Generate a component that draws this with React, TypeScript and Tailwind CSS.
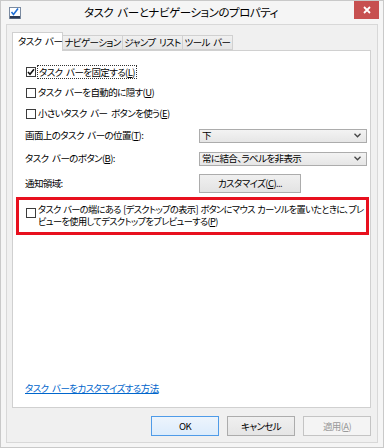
import React from 'react';

const jp = "font-['Noto_Sans_CJK_JP','Noto_Sans',sans-serif] [font-feature-settings:'palt']";

const Check: React.FC<{ checked?: boolean }> = ({ checked }) => (
  <span className="w-[10px] h-[10px] shrink-0 border border-[#3c3c3c] bg-white flex items-center justify-center">
    {checked && (
      <svg width="8" height="8" viewBox="0 0 8 8">
        <path d="M1 4 L3 6.2 L7 1.2" fill="none" stroke="#111" strokeWidth="1.6" />
      </svg>
    )}
  </span>
);

const Select: React.FC<{ value: string }> = ({ value }) => (
  <div className="w-[168px] h-[14px] border border-[#acacac] bg-gradient-to-b from-[#f3f3f3] to-[#e6e6e6] flex items-center pl-[2px] pr-[5px]">
    <span className="flex-1 leading-none">{value}</span>
    <svg width="7" height="5" viewBox="0 0 7 5">
      <path d="M0.5 0.8 L3.5 3.8 L6.5 0.8" fill="none" stroke="#444" strokeWidth="1.3" />
    </svg>
  </div>
);

const u = (c: string) => <span className="underline">{c}</span>;

const WinButton: React.FC<{ children: React.ReactNode; variant?: 'default' | 'normal' | 'disabled' }> = ({ children, variant = 'normal' }) => {
  const cls =
    variant === 'default'
      ? 'border-[#4f9be8] bg-gradient-to-b from-[#edf4fc] to-[#dcecfc] text-black'
      : variant === 'disabled'
      ? 'border-[#c4c4c4] bg-[#f4f4f4] text-[#9a9a9a]'
      : 'border-[#acacac] bg-gradient-to-b from-[#f0f0f0] to-[#e5e5e5] text-black';
  return (
    <div className={`w-[68px] h-[20px] border flex items-center justify-center ${cls}`}>{children}</div>
  );
};

const tabs = ['ナビゲーション', 'ジャンプ リスト', 'ツール バー'];

export default function App() {
  return (
    <div className={`w-[384px] h-[448px] bg-[#f5f5f5] border border-[#c9c9c9] flex flex-col text-[9.5px] tracking-[-0.6px] [word-spacing:2px] text-black ${jp}`}>
      {/* title bar */}
      <div className="h-[23px] flex items-start shrink-0">
        <div className="ml-[8px] mt-[6px] w-[13px] h-[13px]">
          <svg width="13" height="13" viewBox="0 0 13 13">
            <rect x="0.5" y="0.5" width="11" height="11" fill="#fff" stroke="#7a8aa0" />
            <path d="M2.5 5 L4.5 7.5 L9 1.5" fill="none" stroke="#1f6fd6" strokeWidth="1.6" />
            <rect x="1" y="9" width="10" height="2.5" fill="#2d3b55" />
          </svg>
        </div>
        <div className="flex-1 text-center text-[11.5px] tracking-[-0.45px] mt-[3px] pr-[14px]">タスク バーとナビゲーションのプロパティ</div>
        <div className="w-[25px] h-[18px] mr-[4px] bg-[#c75050] flex items-center justify-center">
          <svg width="8" height="8" viewBox="0 0 8 8">
            <path d="M1 1 L7 7 M7 1 L1 7" stroke="#fff" strokeWidth="1.8" />
          </svg>
        </div>
      </div>

      {/* body */}
      <div className="mx-[5px] h-[419px] border border-[#d8d8d8] bg-[#f0f0f0] pl-[5px] pr-[6px] pt-[7px] flex flex-col">
        <div className="flex items-end h-[18px] whitespace-nowrap">
          <div className="w-[51px] h-[19px] bg-white border border-[#d0d0d0] border-b-0 pl-[5px] pt-[4px] relative z-10 -mb-px leading-none">
            タスク バー
          </div>
          {tabs.map((t) => (
            <div key={t} className="w-[60px] last:w-[50px] h-[15px] border border-[#d0d0d0] border-l-0 bg-gradient-to-b from-[#f0f0f0] to-[#e5e5e5] flex items-center justify-center leading-none">
              {t}
            </div>
          ))}
        </div>

        {/* panel */}
        <div className="h-[358px] bg-white border border-[#d0d0d0] pt-[10px] flex flex-col">
          <div className="h-[21px] flex items-center pl-[13px]">
            <Check checked />
            <span className="ml-[1px] px-[1px] border border-dotted border-[#333] leading-[12px]">
              タスク バーを固定する({u('L')})
            </span>
          </div>
          <div className="h-[21px] flex items-center pl-[13px] gap-[2px]">
            <Check />
            <span>タスク バーを自動的に隠す({u('U')})</span>
          </div>
          <div className="h-[21px] flex items-center pl-[13px] gap-[2px]">
            <Check />
            <span>小さいタスク バー ボタンを使う({u('E')})</span>
          </div>
          <div className="h-[23px] flex items-center pl-[12px]">
            <span className="w-[174px] shrink-0">画面上のタスク バーの位置({u('T')}):</span>
            <Select value="下" />
          </div>
          <div className="h-[23px] flex items-center pl-[12px]">
            <span className="w-[174px] shrink-0">タスク バーのボタン({u('B')}):</span>
            <Select value="常に結合、ラベルを非表示" />
          </div>
          <div className="h-[26px] flex items-center pl-[12px]">
            <span className="w-[174px] shrink-0">通知領域:</span>
            <div className="w-[102px] h-[19px] border border-[#acacac] bg-gradient-to-b from-[#f0f0f0] to-[#e3e3e3] flex items-center justify-center">
              カスタマイズ({u('C')})...
            </div>
          </div>

          <div className="mt-[1px] ml-[3px] w-[353px] h-[38px] border-[3px] border-[#e8101e] flex items-start pl-[7px] pt-[8px] gap-[2px]">
            <Check />
            <div className="mt-[-5px] whitespace-nowrap text-[9.2px] tracking-[-0.6px] [word-spacing:1px]">
              <div className="h-[12px] leading-[12px]">
                タスク バーの端にある [デスクトップの表示] ボタンにマウス カーソルを置いたときに、プレ
              </div>
              <div className="h-[12px] leading-[12px]">ビューを使用してデスクトップをプレビューする({u('P')})</div>
            </div>
          </div>

          <div className="mt-auto mb-[12px] pl-[12px]">
            <span className="text-[#0066cc] underline">タスク バーをカスタマイズする方法</span>
          </div>
        </div>

        {/* buttons */}
        <div className="flex justify-end gap-[8px] mt-[8px]">
          <WinButton variant="default">OK</WinButton>
          <WinButton>キャンセル</WinButton>
          <WinButton variant="disabled">適用({u('A')})</WinButton>
        </div>
      </div>
    </div>
  );
}
